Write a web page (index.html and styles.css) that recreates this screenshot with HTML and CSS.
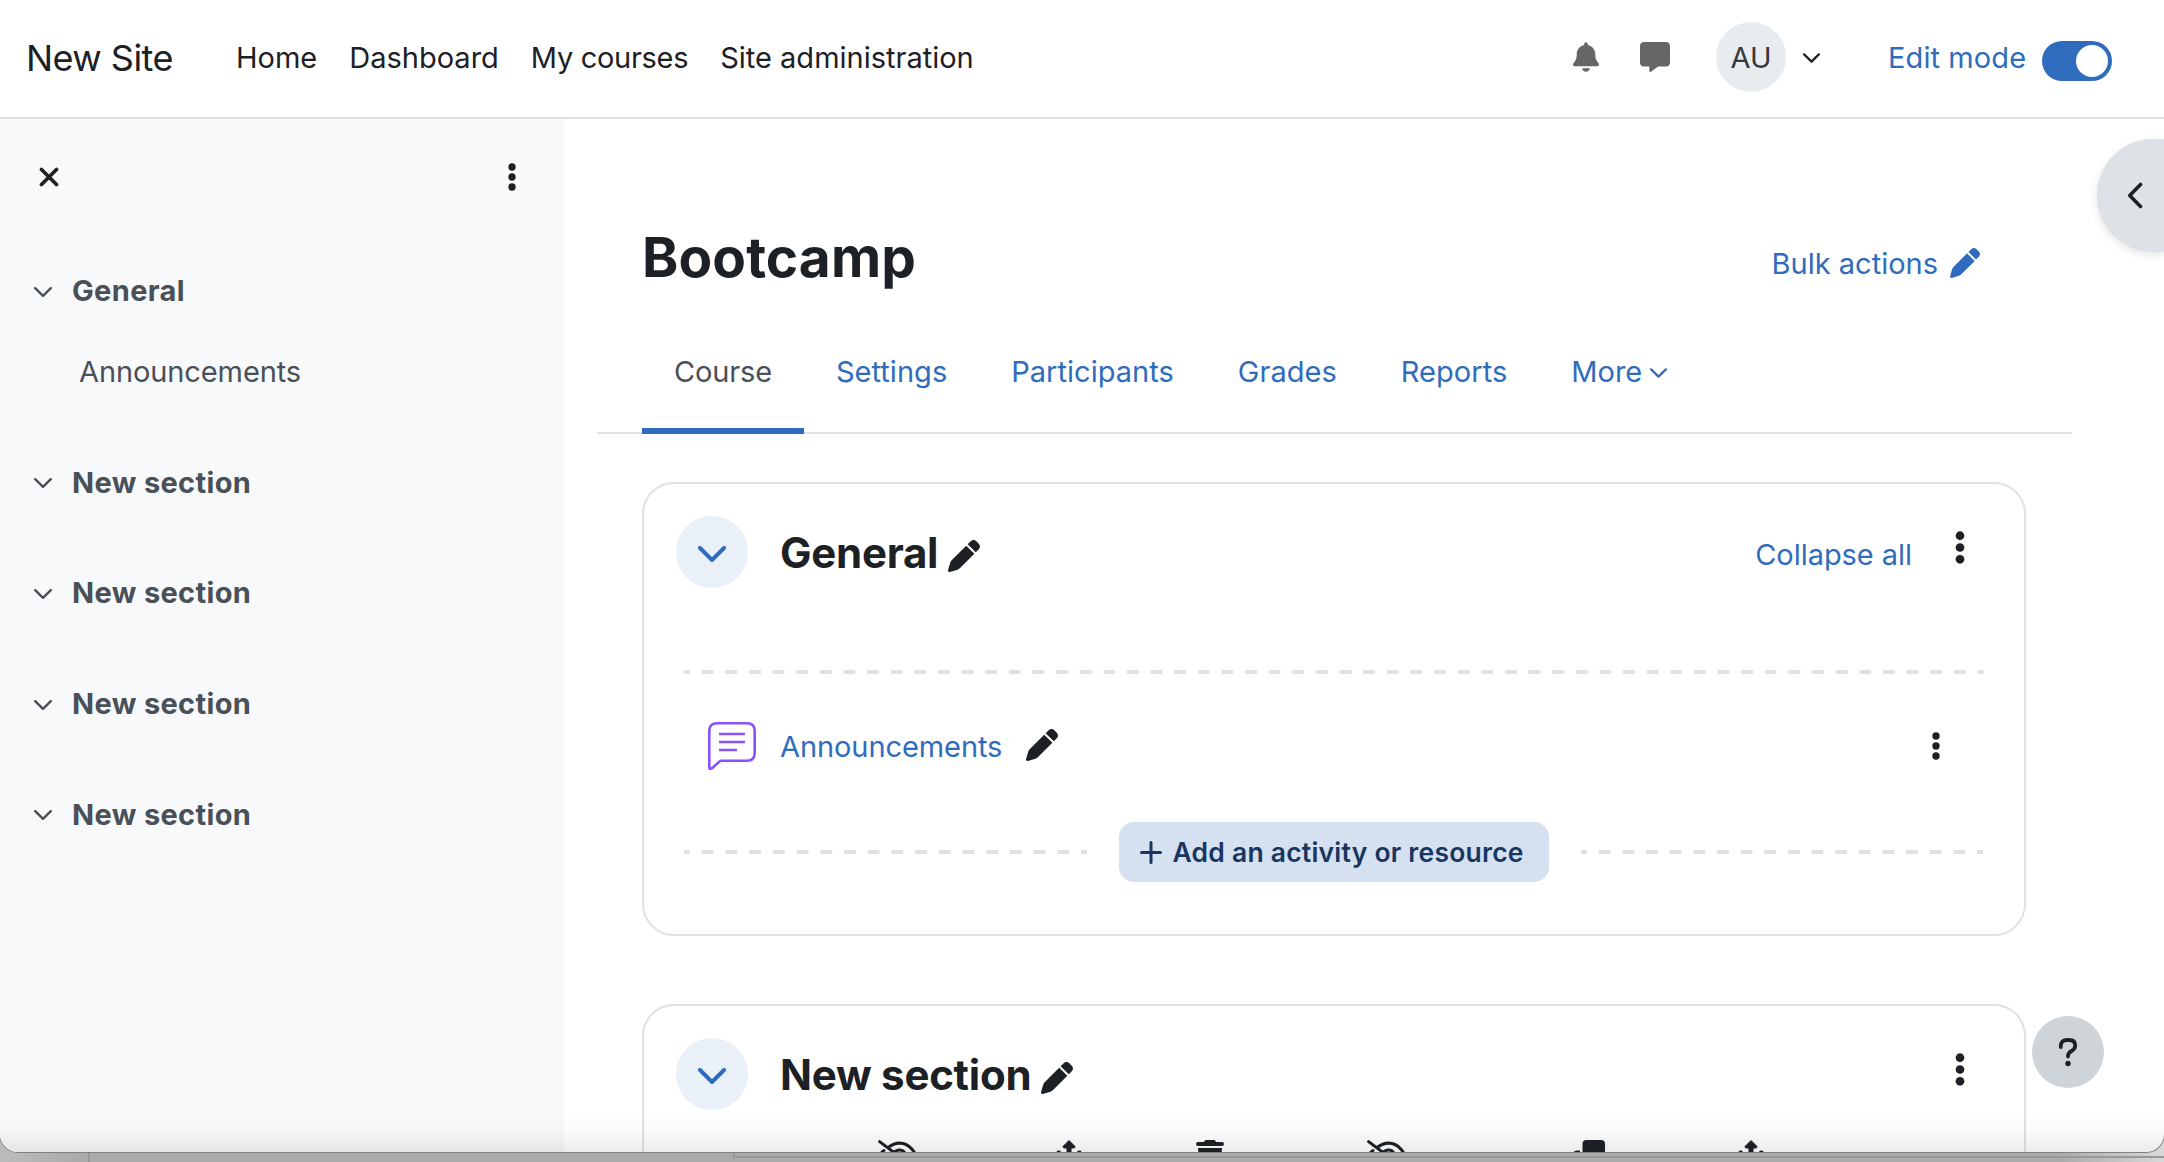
FILE: index.html
```html
<!DOCTYPE html>
<html lang="en">
<head>
<meta charset="utf-8">
<title>Bootcamp | New Site</title>
<link rel="stylesheet" href="styles.css">
</head>
<body>
<svg width="0" height="0" class="sprite">
  <symbol id="pen" viewBox="0 0 512 512"><path d="M362.7 19.3L314.3 67.7 444.3 197.7l48.4-48.4c25-25 25-65.5 0-90.5L453.3 19.3c-25-25-65.5-25-90.5 0zm-71 71L58.6 323.5c-10.4 10.4-18 23.3-22.2 37.4L1 481.2C-1.5 489.7 .8 498.8 7 505s15.3 8.5 23.7 6.1l120.3-35.4c14.1-4.2 27-11.8 37.4-22.2L421.7 220.3 291.7 90.3z"/></symbol>
  <symbol id="chevron" viewBox="0 0 18 10"><path d="M1.2 1.2L9 8.8L16.8 1.2" fill="none" stroke="currentColor" stroke-width="2.4" stroke-linecap="round" stroke-linejoin="round"/></symbol>
  <symbol id="dots" viewBox="0 0 8 28"><circle cx="4" cy="4" r="3.7"/><circle cx="4" cy="14" r="3.7"/><circle cx="4" cy="24" r="3.7"/></symbol>
  <symbol id="hide" viewBox="0 0 42 32"><path d="M1.6 1.6L40 30.5M10 7.5C20 0 31 2 38 15M4 12q1.500-1 2-1.500M15 13.500c4-5 11-5 13 2" fill="none" stroke="currentColor" stroke-width="3" stroke-linecap="round"/></symbol>
  <symbol id="move" viewBox="0 0 32 32"><path d="M16 0.500L22 6.500Q22 8 20.500 8H18V32H14V8H11.500Q10 8 10 6.500Z" stroke="currentColor" stroke-width="1" stroke-linejoin="round"/><circle cx="5.700" cy="13" r="2.400"/><circle cx="26.300" cy="13" r="2.400"/></symbol>
</svg>
<div class="window">
  <header class="topbar">
    <a class="brand">New Site</a>
    <nav class="mainnav"><a>Home</a><a>Dashboard</a><a class="courses">My courses</a><a>Site administration</a></nav>
    <div class="usertools">
      <svg class="bell" viewBox="0 0 448 512"><path d="M224 0c-17.7 0-32 14.3-32 32l0 19.2C119 66 64 130.6 64 208l0 18.8c0 47-17.3 92.4-48.5 127.6l-7.4 8.3c-8.4 9.4-10.4 22.9-5.3 34.4S19.4 416 32 416l384 0c12.6 0 24-7.4 29.2-18.9s3.100-25-5.300-34.400l-7.400-8.300C401.300 319.200 384 273.900 384 226.800l0-18.800c0-77.400-55-142-128-156.800L256 32c0-17.700-14.300-32-32-32zm45.300 493.300c12-12 18.700-28.300 18.700-45.300l-64 0-64 0c0 17 6.700 33.300 18.700 45.300s28.300 18.700 45.300 18.700s33.300-6.700 45.300-18.700z"/></svg>
      <svg class="message" viewBox="0 0 512 512"><path d="M64 0C28.7 0 0 28.7 0 64L0 352c0 35.3 28.7 64 64 64l96 0 0 80c0 6.1 3.4 11.6 8.8 14.3s11.9 2.1 16.8-1.5L309.3 416 448 416c35.3 0 64-28.7 64-64l0-288c0-35.3-28.7-64-64-64L64 0z"/></svg>
      <span class="avatar">AU</span>
      <svg class="usercaret"><use href="#chevron"/></svg>
      <span class="editlabel">Edit mode</span>
      <span class="switch"><i></i></span>
    </div>
  </header>
  <div class="page">
    <aside class="index">
      <div class="indextools">
        <svg class="close" viewBox="0 0 20 20"><path d="M2.500 2.500L17.500 17.500M17.500 2.500L2.500 17.500" fill="none" stroke="currentColor" stroke-width="3.700" stroke-linecap="round"/></svg>
        <svg class="dots"><use href="#dots"/></svg>
      </div>
      <div class="sec"><svg class="caret"><use href="#chevron"/></svg><b>General</b></div>
      <a class="mod">Announcements</a>
      <div class="sec"><svg class="caret"><use href="#chevron"/></svg><b>New section</b></div>
      <div class="sec"><svg class="caret"><use href="#chevron"/></svg><b>New section</b></div>
      <div class="sec"><svg class="caret"><use href="#chevron"/></svg><b>New section</b></div>
      <div class="sec"><svg class="caret"><use href="#chevron"/></svg><b>New section</b></div>
    </aside>
    <main class="content">
      <div class="titlebar">
        <h1>Bootcamp</h1>
        <a class="bulk">Bulk actions<svg><use href="#pen"/></svg></a>
      </div>
      <nav class="tabs">
        <a class="active">Course</a><a>Settings</a><a>Participants</a><a>Grades</a><a>Reports</a><a>More<svg><use href="#chevron"/></svg></a>
      </nav>
      <section class="card">
        <div class="cardhead">
          <span class="toggle"><svg viewBox="0 0 28 16"><path d="M2 2L14 14L26 2" fill="none" stroke="currentColor" stroke-width="4" stroke-linecap="round" stroke-linejoin="round"/></svg></span>
          <h2>General</h2><svg class="pen"><use href="#pen"/></svg>
          <a class="collapse">Collapse all</a>
          <svg class="dots big"><use href="#dots"/></svg>
        </div>
        <div class="dash top"></div>
        <div class="activity">
          <svg class="forum" viewBox="0 0 48 48"><g fill="none" stroke="#8a52ff" stroke-width="2.600"><path d="M1.300 45.500V9Q1.300 1.300 9 1.300H39Q46.700 1.300 46.700 9V31Q46.700 38.700 39 38.700H12.500L4 46.200Q1.300 48 1.300 45.500Z" stroke-linejoin="round"/><path d="M11 12H37M11 20H37M11 28H29"/></g></svg>
          <a>Announcements</a><svg class="pen"><use href="#pen"/></svg>
          <svg class="dots"><use href="#dots"/></svg>
        </div>
        <div class="addrow">
          <div class="dash"></div>
          <button><svg viewBox="0 0 22 23"><path d="M11 1.600V21.400M1.500 11.500H20.500" stroke="currentColor" stroke-width="3" stroke-linecap="round"/></svg><span>Add an activity or resource</span></button>
          <div class="dash"></div>
        </div>
      </section>
      <section class="card second">
        <div class="cardhead">
          <span class="toggle"><svg viewBox="0 0 28 16"><path d="M2 2L14 14L26 2" fill="none" stroke="currentColor" stroke-width="4" stroke-linecap="round" stroke-linejoin="round"/></svg></span>
          <h2>New section</h2><svg class="pen"><use href="#pen"/></svg>
          <svg class="dots big"><use href="#dots"/></svg>
        </div>
        <div class="bulktools">
          <svg width="42" height="32"><use href="#hide"/></svg>
          <svg width="32" height="32"><use href="#move"/></svg>
          <svg width="28" height="32" viewBox="0 0 448 512"><path d="M135.200 17.700L128 32 32 32C14.300 32 0 46.300 0 64S14.300 96 32 96l384 0c17.700 0 32-14.300 32-32s-14.300-32-32-32l-96 0-7.200-14.300C307.400 6.800 296.300 0 284.200 0L163.800 0c-12.100 0-23.200 6.800-28.600 17.700zM416 128L32 128 53.200 467c1.600 25.300 22.600 45 47.900 45l245.800 0c25.300 0 46.300-19.700 47.900-45L416 128z"/></svg>
          <svg width="42" height="32"><use href="#hide"/></svg>
          <svg width="32" height="32" viewBox="0 0 32 32"><rect x="9.500" width="22.500" height="22" rx="4"/><path d="M7 10.500H4Q0 10.500 0 14.500V28Q0 32 4 32H18Q22 32 22 28V24H7Z"/></svg>
          <svg width="32" height="32"><use href="#move"/></svg>
        </div>
      </section>
    </main>
  </div>
  <div class="drawer"><svg viewBox="0 0 16 27"><path d="M13.500 2.500L2.800 13.500L13.500 24.500" fill="none" stroke="currentColor" stroke-width="3.600" stroke-linecap="round" stroke-linejoin="round"/></svg></div>
  <div class="help"><svg viewBox="0 0 20 30"><path d="M2.800 10V9Q2.800 3 9 3H11Q17.200 3 17.200 8.500Q17.200 12 13.500 14Q10 16 10 19V19.500" fill="none" stroke="currentColor" stroke-width="3.800" stroke-linecap="round"/><circle cx="10" cy="26.500" r="2.700"/></svg></div>
  <div class="fade"></div>
</div>
<div class="behind"><i></i><i></i></div>
</body>
</html>
```
FILE: styles.css
```css
* { box-sizing: border-box; }
body {
  margin: 0;
  height: 1162px;
  overflow: hidden;
  font-family: Inter, "Liberation Sans", sans-serif;
  font-size: 29px;
  line-height: 44px;
  color: #1d2125;
  background: linear-gradient(90deg, #bcbcbc, #ababab 80px, #ababab 2060px, #d8d8d8);
}
svg { display: block; fill: currentColor; flex: none; }
.sprite { position: absolute; }
h1, h2 { margin: 0; font-weight: 700; }
a { white-space: nowrap; }
.window {
  position: relative;
  height: 1152px;
  overflow: hidden;
  background: #fff;
  border-radius: 0 0 18px 18px;
  box-shadow: 0 0 0 1px #808080;
}

.topbar { display: flex; align-items: center; height: 119px; padding: 0 52px 4px 26px; border-bottom: 2px solid #dee2e6; }
.brand { width: 210px; padding-top: 2px; font-size: 36px; letter-spacing: -0.55px; }
.mainnav { display: flex; gap: 32px; padding-top: 2px; }
.mainnav .courses { letter-spacing: -0.3px; }
.usertools { display: flex; align-items: center; margin-left: auto; }
.bell { width: 26px; height: 30px; color: #666; }
.message { width: 30px; height: 30px; margin-left: 41px; color: #666; }
.avatar { width: 70px; height: 70px; margin-left: 46px; border-radius: 50%; background: #e9ecef; color: #343a40; text-align: center; line-height: 72px; }
.usercaret { width: 17px; height: 10px; margin: 3px 0 0 17px; }
.editlabel { width: 154px; margin-left: 68px; padding-top: 2px; color: #306cbd; letter-spacing: 0.1px; white-space: nowrap; }
.switch { width: 70px; height: 40px; margin-top: 8px; padding: 4px; border-radius: 20px; background: #306cbd; }
.switch i { display: block; width: 32px; height: 32px; margin-left: auto; border-radius: 50%; background: #fff; }

.page { display: flex; height: 1033px; }
.index { width: 564px; padding: 42px 48px 0 34px; background: #f8f9fb; color: #495057; }
.indextools { display: flex; align-items: center; justify-content: space-between; height: 32px; margin-bottom: 76px; color: #1d2125; }
.close { width: 20px; height: 20px; margin-left: 5px; }
.dots { width: 8px; height: 28px; }
.sec { display: flex; align-items: center; height: 44px; margin-bottom: 66.700px; }
.sec b { font-weight: 700; letter-spacing: 0.35px; }
.caret { width: 18px; height: 10px; margin: 1px 20px 0 0; }
.mod { display: block; margin: -30px 0 67px 45px; letter-spacing: -0.1px; }

.content { flex: 1; min-width: 0; padding: 0 92px 0 33px; }
.titlebar { display: flex; justify-content: space-between; height: 218px; padding: 106px 92px 0 45px; }
h1 { height: 64px; font-size: 55px; line-height: 64px; letter-spacing: 0.1px; }
.bulk { display: flex; align-items: center; gap: 12px; height: 44px; margin-top: 17px; color: #306cbd; }
.bulk svg { width: 30px; height: 30px; margin-top: -2px; }
.tabs { display: flex; height: 97px; padding-left: 45px; border-bottom: 2px solid #dee2e6; }
.tabs a { display: flex; height: 97px; padding: 13px 32px 0; color: #306cbd; letter-spacing: 0.03px; }
.tabs .active { color: #495057; border-bottom: 6px solid #306cbd; letter-spacing: -0.15px; }
.tabs svg { width: 17px; height: 10px; margin: 18px 0 0 8px; }

.card { height: 454px; margin: 48px 46px 0 45px; padding: 32px 39px 0 32px; border: 2px solid #dee2e6; border-radius: 32px; }
.second { height: 260px; margin-top: 68px; }
.cardhead { display: flex; align-items: center; height: 72px; }
.toggle { display: flex; align-items: center; justify-content: center; width: 72px; height: 72px; margin-right: 32px; padding-top: 4px; border-radius: 50%; background: #e9f0f8; color: #306cbd; }
.toggle svg { width: 28px; height: 16px; }
h2 { padding-top: 1px; font-size: 42px; letter-spacing: -0.25px; }
.pen { width: 32px; height: 32px; margin: 8px 0 0 10px; }
.collapse { margin: 6px 0 0 auto; color: #306cbd; letter-spacing: -0.05px; }
.big { width: 10px; height: 33px; margin: -9px 20px 0 43px; }
.second .big { margin-left: auto; }
.dash { height: 4px; background: linear-gradient(90deg, #dee2e6 25%, transparent 25% 75%, #dee2e6 75%) 0 0 / 23.650px 4px round; }
.dash.top { margin: 82px 1px 0 8px; }
.activity { display: flex; align-items: center; height: 48px; margin: 48px 45px 0 32px; }
.activity a { margin: 2px 0 0 24px; color: #306cbd; letter-spacing: -0.08px; }
.activity .pen { margin: -2px 0 0 24px; }
.activity .dots { margin-left: auto; }
.forum { width: 48px; height: 48px; }
.addrow { display: flex; align-items: center; gap: 32px; height: 60px; margin: 52px 2px 0 8px; }
.addrow .dash { flex: 1; }
button { display: flex; align-items: center; width: 430px; height: 60px; padding: 0 0 0 21px; border: 0; border-radius: 15px; background: #d5e1f0; color: #18365f; font: 600 26.500px/40px Inter, sans-serif; letter-spacing: 0.22px; white-space: nowrap; }
button svg { width: 22px; height: 23px; margin-right: 11px; }
.bulktools { display: grid; grid-template-columns: 175px 143px 171px 206px 162px 32px; margin: 30px 0 0 202px; }

/* Course block drawer handle and floating help button */
.drawer { position: absolute; top: 139px; right: 0; width: 67px; height: 113px; padding: 43px 0 0 30px; border-radius: 56px 0 0 56px; background: #dee2e6; box-shadow: 0 3px 8px rgba(0,0,0,.1); }
.drawer svg { width: 16px; height: 27px; }
.help { position: absolute; top: 1016px; right: 60px; display: flex; align-items: center; justify-content: center; width: 72px; height: 72px; border-radius: 50%; background: #ced4d8; }
.help svg { width: 20px; height: 30px; }
.fade { position: absolute; left: 0; right: 0; bottom: 0; height: 38px; background: linear-gradient(transparent, rgba(0,0,0,.02) 45%, rgba(0,0,0,.08)); }

/* Edges of the surface behind the window */
.behind { display: flex; align-items: flex-start; height: 10px; }
.behind i { width: 2px; height: 10px; margin-left: 88px; background: #999; }
.behind i:nth-child(2) { width: 1431px; height: 6px; margin: 0 0 0 643px; background: none; border: solid #999; border-width: 0 0 2px 2px; }
```
